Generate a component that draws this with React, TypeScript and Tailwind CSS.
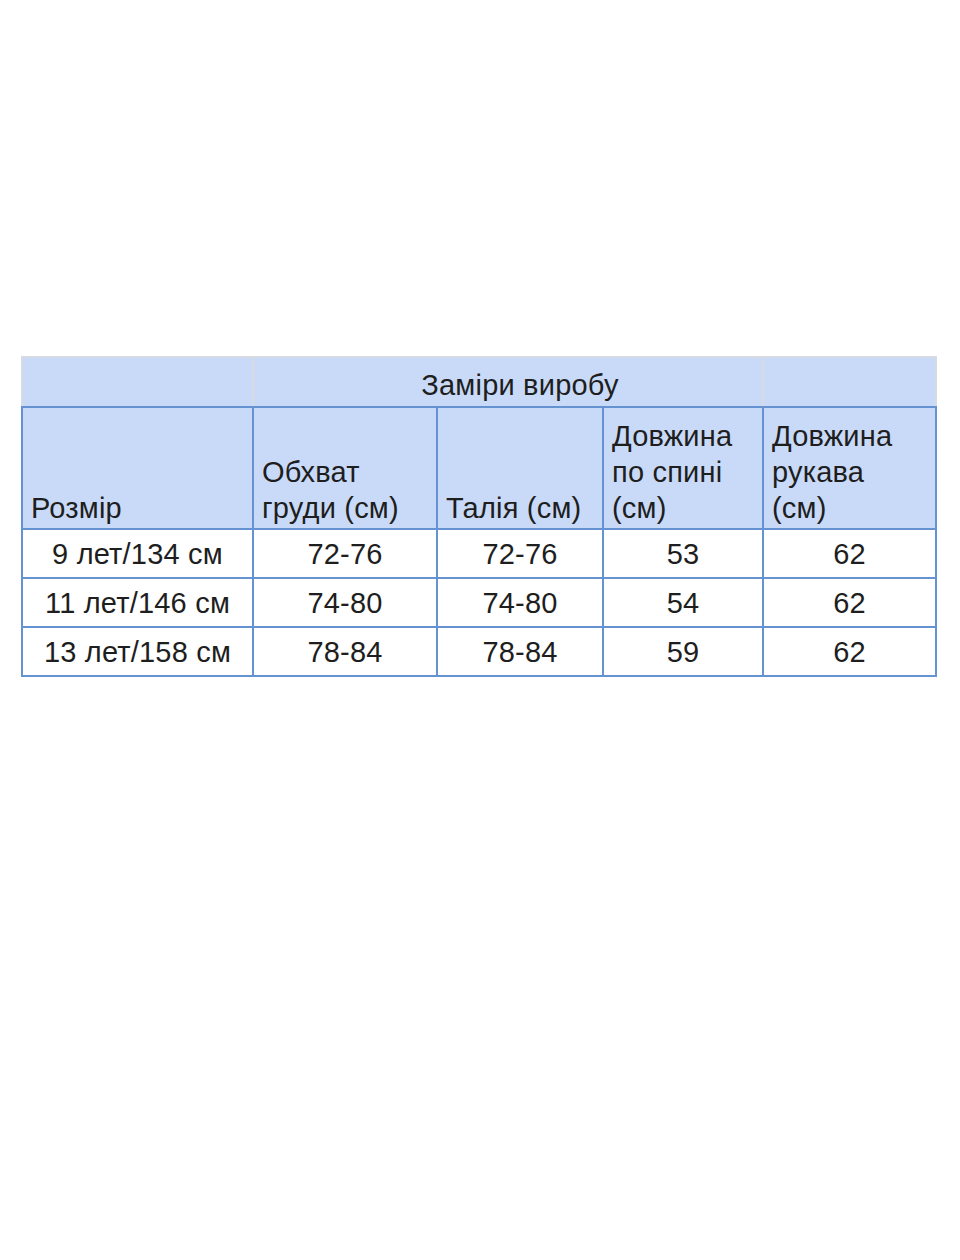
import React from 'react'

const rows = [
  { size: '9 лет/134 см', chest: '72-76', waist: '72-76', back: '53', sleeve: '62' },
  { size: '11 лет/146 см', chest: '74-80', waist: '74-80', back: '54', sleeve: '62' },
  { size: '13 лет/158 см', chest: '78-84', waist: '78-84', back: '59', sleeve: '62' },
]

const head = 'border-2 border-[#6592d0] align-bottom px-2 pb-[2px]'
const cell = 'border-2 border-[#6592d0] text-center'

export default function App() {
  return (
    <div className="w-[960px] h-[1260px] bg-white pt-[356px] pl-[21px] text-[#1e1e1e] font-['Liberation_Sans',Arial,sans-serif]">
      <table className="border-collapse table-fixed text-[29px] leading-[36px] tracking-[0.2px]">
        <colgroup>
          <col className="w-[231px]" />
          <col className="w-[184px]" />
          <col className="w-[166px]" />
          <col className="w-[160px]" />
          <col className="w-[173px]" />
        </colgroup>
        <tbody>
          {/* Group header */}
          <tr className="h-[50px] bg-[#c9daf8]">
            <td className="border-2 border-[#d6dbe3] border-b-[#6592d0]" />
            <td colSpan={3} className="border-2 border-[#d6dbe3] border-b-[#6592d0] text-center align-bottom pb-[3px] pl-6">
              Заміри виробу
            </td>
            <td className="border-2 border-[#d6dbe3] border-b-[#6592d0]" />
          </tr>

          {/* Column headers */}
          <tr className="h-[122px] bg-[#c9daf8]">
            <td className={head}>Розмір</td>
            <td className={head}>Обхват<br />груди (см)</td>
            <td className={head}>Талія (см)</td>
            <td className={head}>Довжина<br />по спині<br />(см)</td>
            <td className={head}>Довжина<br />рукава<br />(см)</td>
          </tr>

          {rows.map((r) => (
            <tr key={r.size} className="h-[49px]">
              <td className={cell}>{r.size}</td>
              <td className={cell}>{r.chest}</td>
              <td className={cell}>{r.waist}</td>
              <td className={cell}>{r.back}</td>
              <td className={cell}>{r.sleeve}</td>
            </tr>
          ))}
        </tbody>
      </table>
    </div>
  )
}
